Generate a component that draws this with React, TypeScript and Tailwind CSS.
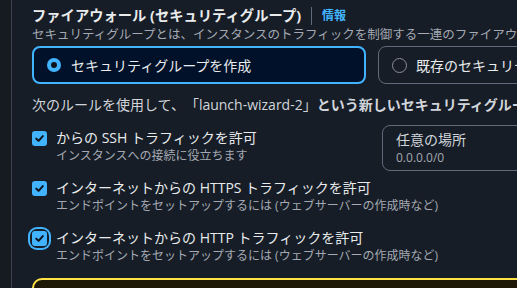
import React from 'react';

const font = { fontFamily: '"Open Sans", "Noto Sans CJK JP", sans-serif' };

function Check({ focused }: { focused?: boolean }) {
  return (
    <div className={`shrink-0 rounded-[5px] ${focused ? 'ring-2 ring-[#42b4ff] ring-offset-2 ring-offset-[#161d26]' : ''}`}>
      <div className="flex h-[15px] w-[15px] items-center justify-center rounded-[3px] bg-[#42b4ff]">
        <svg width="11" height="11" viewBox="0 0 12 12" fill="none">
          <path d="M2.5 6.2 L5 8.6 L9.6 3.4" stroke="#0f141a" strokeWidth="2.2" strokeLinecap="round" strokeLinejoin="round" />
        </svg>
      </div>
    </div>
  );
}

interface RuleProps {
  label: string;
  desc: string;
  focused?: boolean;
}

function Rule({ label, desc, focused }: RuleProps) {
  return (
    <div className="flex items-start gap-[9px]">
      <div className="pt-[3px]">
        <Check focused={focused} />
      </div>
      <div className="flex flex-col">
        <span className="text-[14px] leading-[20px] text-[#e9ebed] whitespace-nowrap">{label}</span>
        <span className="text-[12px] leading-[16px] text-[#a4a9b3] whitespace-nowrap">{desc}</span>
      </div>
    </div>
  );
}

export default function App() {
  return (
    <div className="flex h-[288px] w-[517px] overflow-hidden bg-[#161d26] [text-spacing-trim:space-all]" style={font}>
      <div className="w-[12px] shrink-0 border-r border-[#3b4350] bg-[#161b22]" />
      <div className="flex min-w-0 flex-1 flex-col overflow-hidden pl-[20px] pt-[6px]">
        <div className="flex items-center whitespace-nowrap">
          <h2 className="text-[14.3px] font-bold leading-[20px] text-[#e9ebed]">ファイアウォール (セキュリティグループ)</h2>
          <span className="mx-[10px] h-[18px] w-px bg-[#5f6b7a]" />
          <a className="text-[12px] font-bold text-[#42b4ff]">情報</a>
        </div>
        <p className="whitespace-nowrap text-[12.5px] leading-[18px] text-[#a4a9b3]">
          セキュリティグループとは、インスタンスのトラフィックを制御する一連のファイアウォールルールです。
        </p>

        <div className="mt-[2px] flex gap-[12px]">
          <div className="flex h-[38px] w-[334px] shrink-0 items-center gap-[10px] rounded-[8px] border-2 border-[#42b4ff] bg-[#001129] px-[13px]">
            <span className="h-[14px] w-[14px] rounded-full border-[4px] border-[#42b4ff] bg-[#0f141a]" />
            <span className="text-[14px] text-[#e9ebed] whitespace-nowrap">セキュリティグループを作成</span>
          </div>
          <div className="flex h-[38px] w-[334px] shrink-0 items-center gap-[9px] rounded-[8px] border border-[#5f6b7a] px-[13px]">
            <span className="h-[15px] w-[15px] rounded-full border border-[#8c8c94]" />
            <span className="text-[14px] text-[#e9ebed] whitespace-nowrap">既存のセキュリティグループを選択する</span>
          </div>
        </div>

        <p className="mt-[11px] whitespace-nowrap text-[14px] leading-[20px] text-[#d1d5db]">
          次のルールを使用して、「launch-wizard-2」<span className="font-semibold">という新しいセキュリティグループを作成します</span>
        </p>

        <div className="mt-[13px] flex h-[36px]">
          <div className="w-[350px] shrink-0">
            <Rule label="からの SSH トラフィックを許可" desc="インスタンスへの接続に役立ちます" />
          </div>
          <div className="mt-[-3px] flex h-[46px] w-[160px] shrink-0 flex-col justify-center rounded-[8px] border border-[#5f6b7a] pl-[13px]">
            <span className="text-[14px] leading-[20px] text-[#d1d5db]">任意の場所</span>
            <span className="text-[12px] leading-[16px] text-[#a4a9b3]">0.0.0.0/0</span>
          </div>
        </div>

        <div className="mt-[14px]">
          <Rule label="インターネットからの HTTPS トラフィックを許可" desc="エンドポイントをセットアップするには (ウェブサーバーの作成時など)" />
        </div>
        <div className="mt-[14px]">
          <Rule focused label="インターネットからの HTTP トラフィックを許可" desc="エンドポイントをセットアップするには (ウェブサーバーの作成時など)" />
        </div>

        <div className="mt-[14px] h-[40px] w-[600px] shrink-0 rounded-[10px] border-2 border-[#ffe347] bg-[#1d1906]" />
      </div>
    </div>
  );
}
